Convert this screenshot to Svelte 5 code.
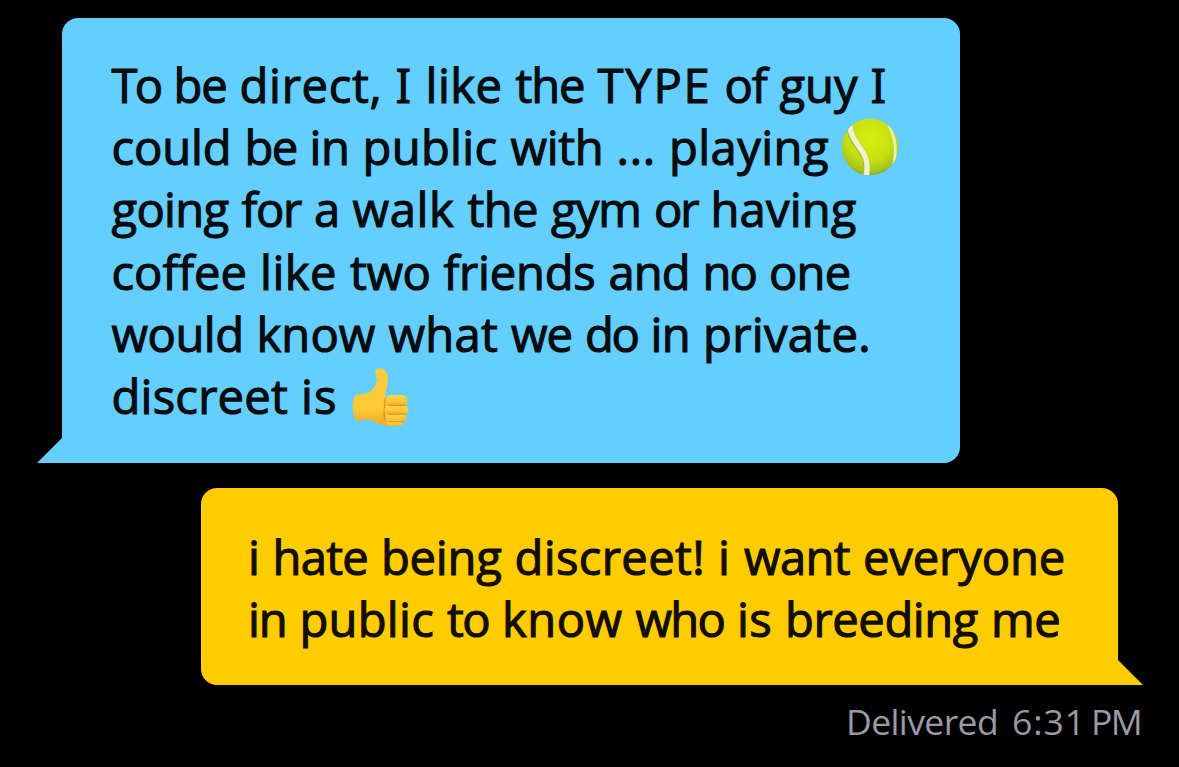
<script>
  // Each word comes with the width that it takes, the gap after it included.
  const first = [
    { words: [['To', 62], ['be', 66], ['direct,', 156], ['I', 30], ['like', 90], ['the', 82], ['TYPE', 127], ['of', 55], ['guy', 91], ['I', 33]] },
    { words: [['could', 133], ['be', 65], ['in', 53], ['public', 148], ['with', 106], ['...', 52.5], ['playing', 173]], icon: 'tennis' },
    { words: [['going', 130], ['for', 72.5], ['a', 38.5], ['walk', 115], ['the', 83.5], ['gym', 103], ['or', 56.5], ['having', 159]] },
    { words: [['coffee', 148.5], ['like', 90], ['two', 93.5], ['friends', 165], ['and', 94], ['no', 66.5], ['one', 94.5]] },
    { words: [['would', 145], ['know', 132], ['what', 122.5], ['we', 74], ['do', 65.5], ['in', 52.5], ['private.', 181]] },
    { words: [['discreet', 189.5], ['is', 49.5]], icon: 'thumb' }
  ];
  const second = [
    { words: [['i', 24.5], ['hate', 108.5], ['being', 133.5], ['discreet!', 203.5], ['i', 26], ['want', 119], ['everyone', 215]] },
    { words: [['in', 51.5], ['public', 147.5], ['to', 55], ['know', 133.5], ['who', 101.5], ['is', 48], ['breeding', 206], ['me', 82.5]] }
  ];
  const gap = 13;

  // Tracks a word out or in so that it takes the given width.
  function fit(node, width) {
    const natural = node.getBoundingClientRect().width;
    const count = [...node.textContent.trim()].length;
    node.style.letterSpacing = `${(width - natural) / count}px`;
  }
</script>

{#snippet line(item)}
  <div class="line">
    {#each item.words as [word, width]}<span class="word" style:width="{width}px"><span class:serif-i={word === 'I'} use:fit={width - gap}>{word}</span>{' '}</span>{/each}
    {#if item.icon === 'tennis'}
      <svg class="emoji ball" viewBox="0 0 58 58" role="img" aria-label="tennis ball">
        <defs>
          <radialGradient id="felt" cx=".5" cy=".35" r=".65">
            <stop offset="0" stop-color="#d8ee12" />
            <stop offset=".6" stop-color="#c6e010" />
            <stop offset=".9" stop-color="#a6c41c" />
            <stop offset="1" stop-color="#8fa833" />
          </radialGradient>
          <clipPath id="round"><circle cx="29" cy="29" r="28.3" /></clipPath>
        </defs>
        <circle cx="29" cy="29" r="28.3" fill="url(#felt)" />
        <g clip-path="url(#round)" fill="none">
          <path d="M9 9C11 31 31 32 24.500 59" stroke="#a5bb2c" stroke-width="7" />
          <path d="M9 8C11 30 31 31 25 59" stroke="#f0f2cc" stroke-width="5.400" />
          <path d="M47.500 7C55 20 56 33 52.500 47" stroke="#e9efb8" stroke-width="2.800" />
        </g>
      </svg>
    {:else if item.icon === 'thumb'}
      <svg class="emoji thumb" viewBox="0 0 58 60" role="img" aria-label="thumbs up">
        <defs>
          <linearGradient id="skin" x1="0" y1="0" x2="0" y2="1">
            <stop offset="0" stop-color="#ffcb42" />
            <stop offset=".7" stop-color="#ffcb36" />
            <stop offset="1" stop-color="#eda929" />
          </linearGradient>
          <linearGradient id="finger" x1="0" y1="0" x2="0" y2="1">
            <stop offset="0" stop-color="#ffd452" />
            <stop offset=".6" stop-color="#fec535" />
            <stop offset="1" stop-color="#eda824" />
          </linearGradient>
        </defs>
        <path d="M3 29C7 26 13 28 18 25C23 21 25 17 25.500 13C25.500 9 22 5 25 2C28-1 34 1 36 7C38.500 15 33.500 22 34 31L43 34L42 58.500C34 60 27 58 20 54C14 51 9 56 4 54C0 47-.500 35 3 29Z" fill="url(#skin)" />
        <path d="M36 30.500C31 33 34 39 33 43C32 48 33 55 37 58" fill="none" stroke="#dc971f" stroke-width="1.600" />
        <rect x="34" y="28" width="22.500" height="11" rx="5.300" fill="url(#finger)" />
        <rect x="33" y="38.500" width="24.500" height="9.500" rx="4.700" fill="url(#finger)" />
        <rect x="34" y="47.500" width="21.500" height="8" rx="4" fill="url(#finger)" />
        <rect x="34.500" y="54" width="17" height="5.700" rx="2.800" fill="url(#finger)" />
        <path d="M37 38.600H54M37 47.600H54M37 55H51.500" stroke="#d58e1a" stroke-width=".9" stroke-linecap="round" />
      </svg>
    {/if}
  </div>
{/snippet}

<main>
  <section class="bubble received">
    {#each first as item}{@render line(item)}{/each}
    <svg class="tail" viewBox="0 0 26 26"><path d="M26 0V26H0Z" /></svg>
  </section>
  <section class="bubble sent">
    {#each second as item}{@render line(item)}{/each}
    <svg class="tail" viewBox="0 0 26 26"><path d="M0 0V26H26Z" /></svg>
  </section>
  <footer>
    <span use:fit={152}>Delivered</span>
    <span class="time" use:fit={74}>6:31</span>
    <span class="half" use:fit={50}>PM</span>
  </footer>
</main>

<style>
  :global(body) { background: #000; }
  main {
    box-sizing: border-box;
    height: 767px;
    padding-top: 18px;
    display: flex;
    flex-direction: column;
    align-items: flex-start;
    overflow: hidden;
    background: #000;
    font-family: "Open Sans", "Noto Sans", sans-serif;
  }
  .bubble {
    position: relative;
    box-sizing: border-box;
    border-radius: 16px;
    color: #070b0e;
    font-size: 47.2px;
    -webkit-text-stroke: 1.1px currentColor;
  }
  .received {
    width: 898px;
    height: 445px;
    margin-left: 62px;
    padding: 35.5px 0 0 49.5px;
    border-bottom-left-radius: 0;
    background: #64ceff;
  }
  .sent {
    width: 917px;
    height: 197px;
    margin: 25px 0 0 201px;
    padding: 37.5px 0 0 47px;
    border-bottom-right-radius: 0;
    background: #fc0;
    color: #120e05;
  }
  .line {
    display: flex;
    align-items: center;
    height: 62.4px;
    line-height: 62.4px;
    white-space: pre;
  }
  .word { flex: none; }
  .serif-i { font-feature-settings: "ss03", "salt"; }
  .emoji { flex: none; display: block; -webkit-text-stroke: 0; }
  .ball { width: 58px; height: 58px; margin-left: -1px; }
  .thumb { width: 57px; height: 60px; margin-left: 1px; }
  .tail { position: absolute; bottom: 0; width: 26px; height: 26px; }
  .received .tail { left: -25px; fill: #64ceff; }
  .sent .tail { right: -25px; fill: #fc0; }
  footer {
    display: flex;
    align-self: flex-end;
    margin: 11px 38px 0 0;
    color: #9a99a4;
    font-size: 35.5px;
    line-height: 50px;
    white-space: pre;
  }
  .time { margin-left: 14px; }
  .half { margin-left: 5px; }
</style>
